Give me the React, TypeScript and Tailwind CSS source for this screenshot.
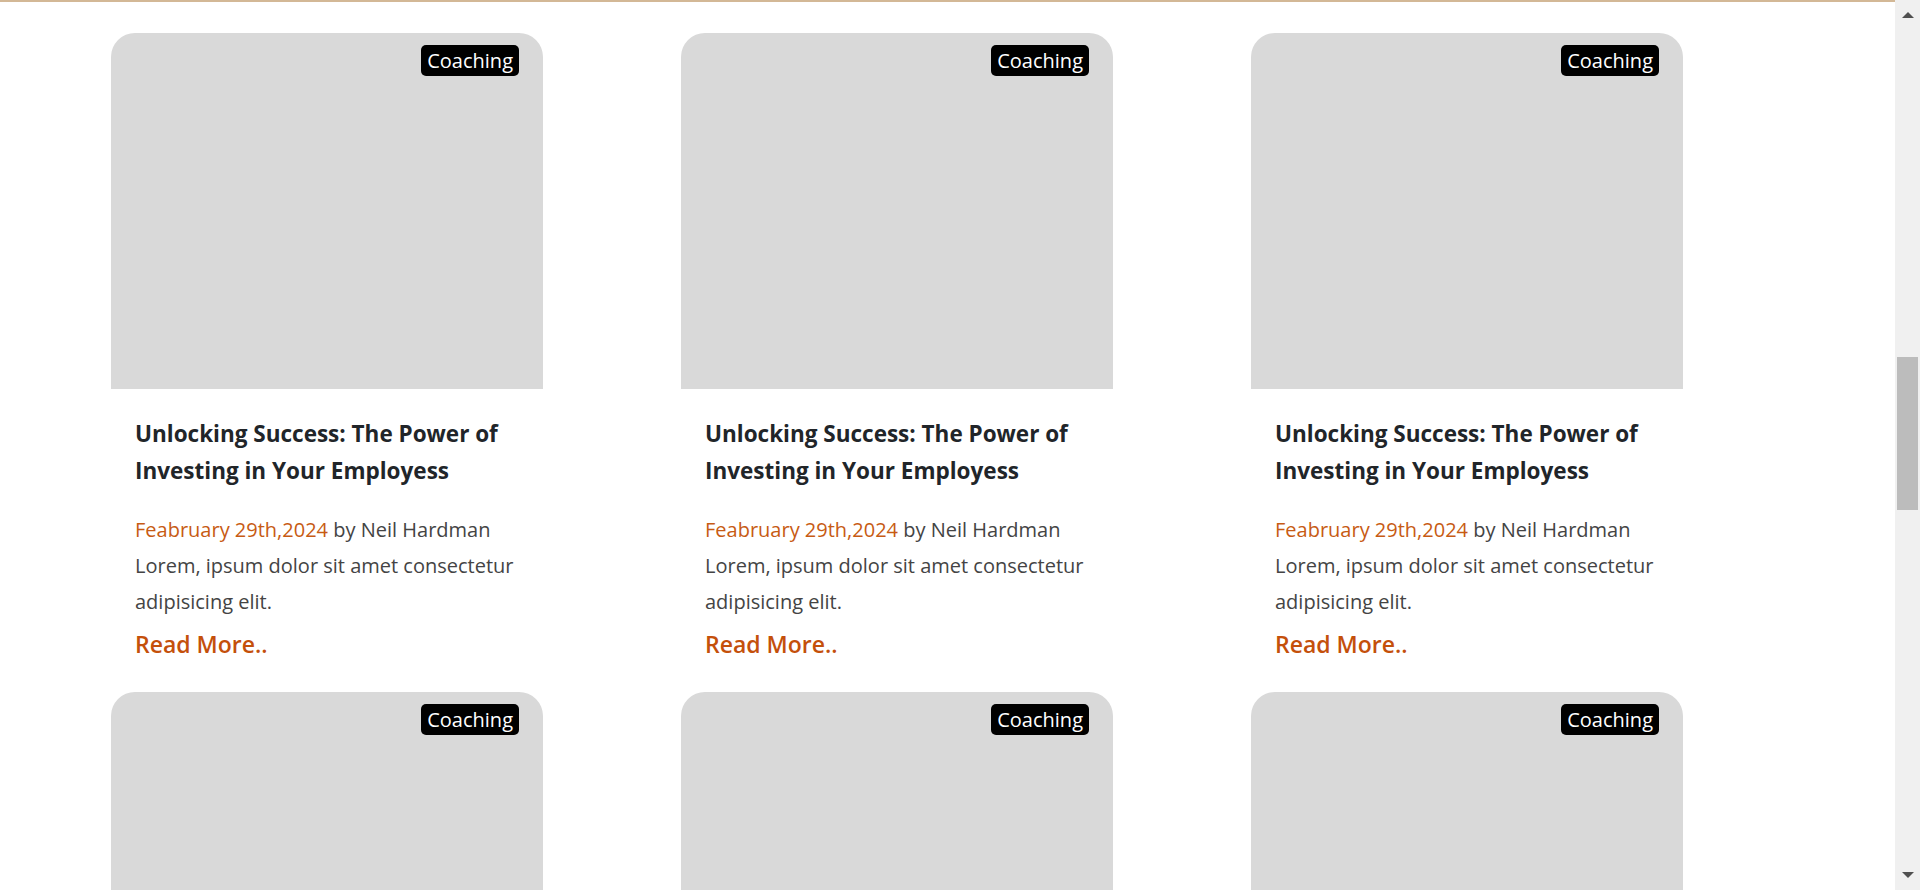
const posts = [1, 2, 3, 4, 5, 6].map((i) => ({
  id: i,
  tag: "Coaching",
  title: "Unlocking Success: The Power of Investing in Your Employess",
  date: "Feabruary 29th,2024",
  author: "Neil Hardman",
  excerpt: "Lorem, ipsum dolor sit amet consectetur adipisicing elit.",
}));

type Post = (typeof posts)[number];

const PostCard = ({ post }: { post: Post }) => {
  return (
    <div className="w-[432px]">
      <div className="relative h-[356px] rounded-t-[24px] bg-[#d9d9d9]">
        <span className="absolute right-[24px] top-[12px] rounded-[5px] bg-black px-[6px] text-[20px] leading-[31px] text-white">
          {post.tag}
        </span>
      </div>
      <div className="px-[24px] pt-[26px]">
        <h3 className="text-[22.5px] font-bold leading-[37px] text-[#212529]">
          {post.title}
        </h3>
        <p className="mt-[23px] text-[20px] leading-[36px] text-[#444]">
          <span className="text-[#c75b13]">{post.date}</span> by {post.author}
        </p>
        <p className="text-[20px] leading-[36px] text-[#444]">{post.excerpt}</p>
        <a href="#" className="mt-[6px] block text-[23px] font-semibold leading-[36px] text-[#c4500b]">
          Read More..
        </a>
      </div>
    </div>
  );
};

const Scrollbar = () => (
  <div className="flex w-[25px] shrink-0 flex-col items-center bg-[#f0f0f0]">
    <div className="mt-[12px] h-0 w-0 border-x-[6px] border-b-[6px] border-x-transparent border-b-[#505050]" />
    <div className="mt-[339px] h-[153px] w-[21px] bg-[#bcbcbc]" />
    <div className="mt-auto mb-[12px] h-0 w-0 border-x-[6px] border-t-[6px] border-x-transparent border-t-[#505050]" />
  </div>
);

export default function App() {
  return (
    <div
      className="flex h-[890px] w-full overflow-hidden bg-white"
      style={{ fontFamily: '"Open Sans", "Noto Sans", sans-serif' }}
    >
      <main className="flex-1 overflow-hidden border-t-2 border-[#d3b896]">
        <div className="grid grid-cols-[repeat(3,432px)] gap-x-[138px] gap-y-[30px] pl-[111px] pt-[31px]">
          {posts.map((post) => (
            <PostCard key={post.id} post={post} />
          ))}
        </div>
      </main>
      <Scrollbar />
    </div>
  );
}
